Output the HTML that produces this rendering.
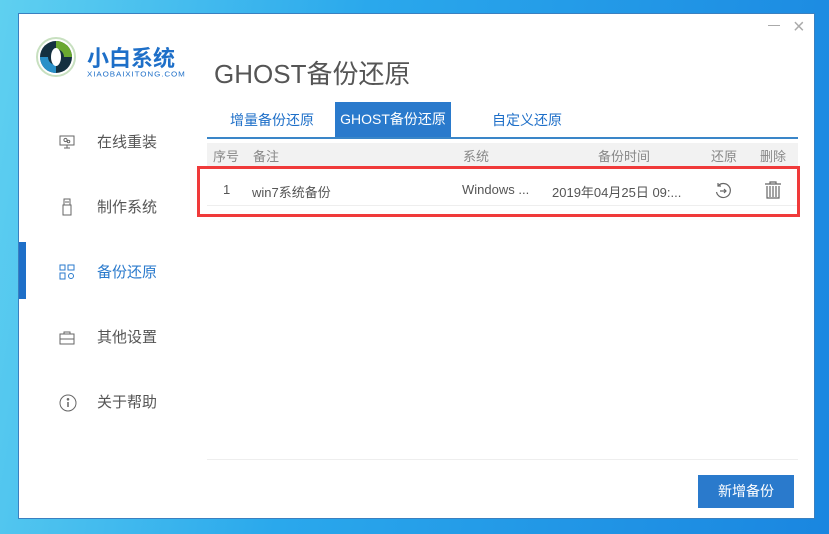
<!DOCTYPE html>
<html><head><meta charset="utf-8"><style>
*{margin:0;padding:0;box-sizing:border-box}
body{width:829px;height:534px;overflow:hidden;background:linear-gradient(100deg,#5fd0f0 0%,#2aa8ec 40%,#1a86e0 100%);font-family:"Liberation Sans","Noto Sans CJK SC",sans-serif;position:relative}
.win{position:absolute;left:18px;top:13px;width:797px;height:506px;background:#fff;border:1px solid #3a80c0}
.abs{position:absolute}
.nav{position:absolute;left:78px;font-size:15px;color:#555}
.ic{position:absolute;left:40px}
</style></head><body>
<div class="win">
<svg class="abs" style="left:17px;top:23px" width="40" height="40" viewBox="0 0 40 40">
<circle cx="20" cy="20" r="19" fill="none" stroke="#c8e0c0" stroke-width="2"/>
<circle cx="20" cy="20" r="16" fill="#143040"/>
<path d="M20 4 A16 16 0 0 1 36 20 L28 20 A8 8 0 0 0 20 12Z" fill="#6aa830"/>
<path d="M20 36 A16 16 0 0 1 4 20 L12 20 A8 8 0 0 0 20 28Z" fill="#2a90c8"/>
<ellipse cx="20" cy="20" rx="5" ry="9" fill="#fff"/>
</svg>
<div class="abs" style="left:68px;top:27px;font-size:22px;font-weight:bold;color:#1e6fc8;letter-spacing:0px">小白系统</div>
<div class="abs" style="left:68px;top:56px;font-size:8px;color:#1e6fc8;letter-spacing:0.9px;transform:scaleY(0.9)">XIAOBAIXITONG.COM</div>
<div class="abs" style="left:195px;top:40px;font-size:26px;color:#555">GHOST备份还原</div>
<div class="abs" style="left:749px;top:11px;width:12px;height:1px;background:#aaa"></div>
<div class="abs" style="left:774px;top:2px;font-size:20px;color:#aaa">×</div>

<svg class="ic" style="top:120px" width="16" height="16" viewBox="0 0 16 16" fill="none" stroke="#666"><rect x="1" y="2" width="14" height="9"/><circle cx="6.5" cy="6" r="1.6"/><circle cx="9.5" cy="7.5" r="1.3"/><path d="M8 11v3M5 14h6"/></svg>
<div class="nav" style="top:117px">在线重装</div>
<svg class="ic" style="top:184px" width="16" height="18" viewBox="0 0 16 18" fill="none" stroke="#666"><rect x="4" y="7" width="8" height="10"/><path d="M5 7V1h6v6M7 3v2M9 3v2"/></svg>
<div class="nav" style="top:182px">制作系统</div>
<div class="abs" style="left:0;top:228px;width:7px;height:57px;background:#1e6fc8"></div>
<svg class="ic" style="top:250px" width="16" height="16" viewBox="0 0 16 16" fill="none" stroke="#2a7acc"><rect x="1" y="1" width="5" height="5"/><rect x="9" y="1" width="6" height="5"/><rect x="1" y="9" width="5" height="6"/><circle cx="12" cy="12" r="2.5"/></svg>
<div class="nav" style="top:247px;color:#2a7acc">备份还原</div>
<svg class="ic" style="top:317px" width="16" height="14" viewBox="0 0 16 14" fill="none" stroke="#666"><rect x="1" y="3" width="14" height="10"/><path d="M5 3V1h6v2M1 8h14"/></svg>
<div class="nav" style="top:312px">其他设置</div>
<svg class="ic" style="top:380px" width="18" height="18" viewBox="0 0 18 18" fill="none" stroke="#666"><circle cx="9" cy="9" r="8"/><path d="M9 8v5" stroke-width="1.5"/><circle cx="9" cy="5.3" r="0.8" fill="#666"/></svg>
<div class="nav" style="top:377px">关于帮助</div>

<div class="abs" style="left:211px;top:96px;font-size:14px;color:#1e6fc8">增量备份还原</div>
<div class="abs" style="left:316px;top:88px;width:116px;height:35px;background:#2a7acc;color:#fff;font-size:14px;text-align:center;line-height:35px">GHOST备份还原</div>
<div class="abs" style="left:473px;top:96px;font-size:14px;color:#1e6fc8">自定义还原</div>
<div class="abs" style="left:188px;top:123px;width:591px;height:2px;background:#3a86c8"></div>
<div class="abs" style="left:188px;top:129px;width:591px;height:24px;background:#f2f2f2;font-size:13px;color:#888">
<span class="abs" style="left:6px;top:3px">序号</span><span class="abs" style="left:46px;top:3px">备注</span><span class="abs" style="left:256px;top:3px">系统</span><span class="abs" style="left:391px;top:3px">备份时间</span><span class="abs" style="left:504px;top:3px">还原</span><span class="abs" style="left:553px;top:3px">删除</span></div>
<div class="abs" style="left:188px;top:191px;width:591px;height:1px;background:#eee"></div>
<div class="abs" style="left:178px;top:152px;width:603px;height:51px;border:3px solid #f03a3a"></div>
<div class="abs" style="top:168px;font-size:13px;color:#555;left:0;width:797px">
<span class="abs" style="left:204px">1</span><span class="abs" style="left:233px">win7系统备份</span><span class="abs" style="left:443px">Windows ...</span><span class="abs" style="left:533px">2019年04月25日 09:...</span></div>
<svg class="abs" style="left:695px;top:168px" width="18" height="18" viewBox="0 0 18 18" fill="none" stroke="#666" stroke-width="1.2"><path d="M4 4A7 7 0 1 1 2.5 10"/><path d="M4 1v3h3"/><path d="M6 9h6M10 7l2 2-2 2"/></svg>
<svg class="abs" style="left:745px;top:167px" width="18" height="18" viewBox="0 0 18 18" fill="none" stroke="#666" stroke-width="1.2"><path d="M1 3h16M6 3V1h6v2M3 5v12h12V5M6 5v11M9 5v11M12 5v11"/></svg>

<div class="abs" style="left:188px;top:445px;width:591px;height:1px;background:#eee"></div>
<div class="abs" style="left:679px;top:461px;width:96px;height:33px;background:#2a7acc;color:#fff;font-size:14px;text-align:center;line-height:33px">新增备份</div>
</div>
</body></html>
